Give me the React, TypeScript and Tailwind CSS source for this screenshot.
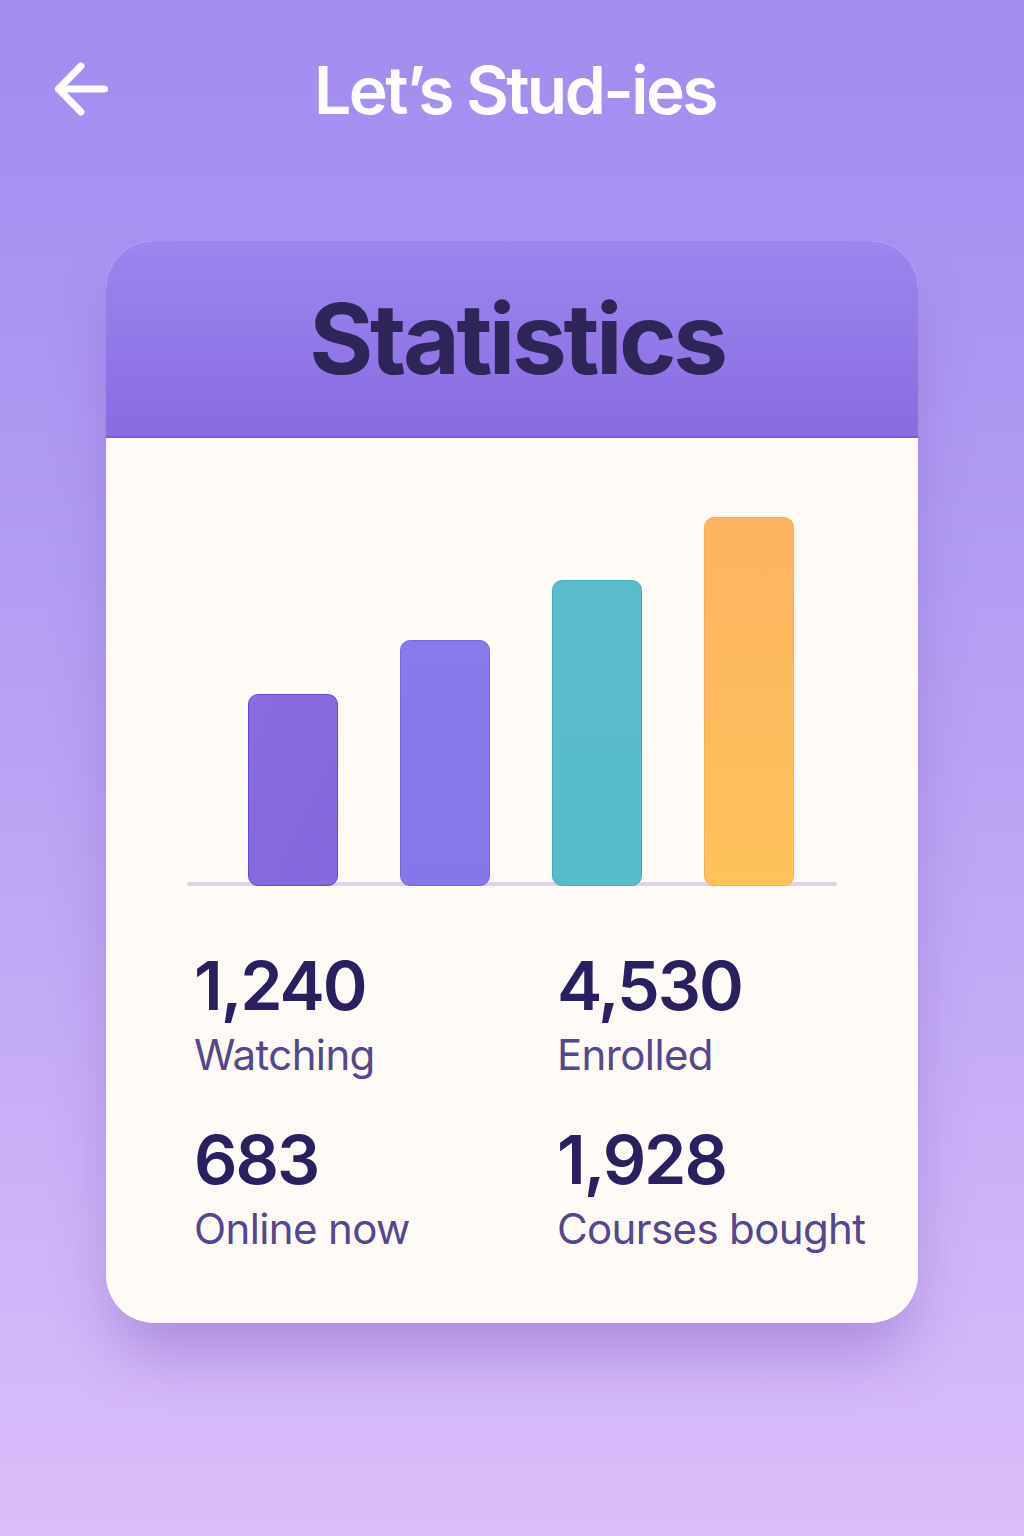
import React from "react";

const bars = [
  { h: 192, cls: "bg-gradient-to-br from-[#8a6ce0] to-[#8467dc] border border-[#6548d2]" },
  { h: 246, cls: "bg-gradient-to-b from-[#877aea] to-[#8677e8] border border-[#7866e3]" },
  { h: 306, cls: "bg-gradient-to-b from-[#59bccb] to-[#57bcca] border border-[#45adbc]" },
  { h: 369, cls: "bg-gradient-to-b from-[#fdb35f] to-[#fec35b] border border-[#f6b04e]" },
];

const stats = [
  { n: "1,240", l: "Watching" },
  { n: "4,530", l: "Enrolled" },
  { n: "683", l: "Online now" },
  { n: "1,928", l: "Courses bought" },
];

export default function App() {
  return (
    <div
      className="min-h-[1536px] w-full bg-gradient-to-b from-[#a18cf0] via-[#b9a3f4] to-[#dbbefa]"
      style={{ fontFamily: "Inter, 'Noto Sans', 'Liberation Sans', sans-serif" }}
    >
      <header className="relative flex h-[180px] items-start justify-center pt-[57px]">
        <button className="absolute left-[48px] top-[56px] flex h-[66px] w-[66px] items-center justify-center text-white">
          <svg width="66" height="66" viewBox="0 0 66 66" fill="none" stroke="currentColor" strokeWidth="7" strokeLinecap="round" strokeLinejoin="round">
            <path d="M33 10 L10.5 33 L33 56" />
            <path d="M10.5 33 H56.5" />
          </svg>
        </button>
        <h1 className="pl-[6px] text-[66px] font-semibold leading-none tracking-[-0.04em] text-white">Let’s Stud-ies</h1>
      </header>

      <div className="mx-auto mt-[61px] w-[812px] overflow-hidden rounded-[48px] bg-[#fefaf5] shadow-[0_40px_60px_-10px_rgba(110,70,180,0.38)]">
        <div className="flex h-[197px] items-center justify-center border-b-2 border-[#7b5ddb] bg-gradient-to-b from-[#9b87ef] to-[#8a6be1]">
          <h2 className="pl-[10px] text-[98px] font-bold leading-none tracking-[-0.035em] text-[#2e2659]">Statistics</h2>
        </div>

        <div className="px-[81px] pt-[79px]">
          <div className="relative h-[369px]">
            <div className="absolute bottom-0 left-0 right-0 h-[4px] rounded-full bg-[#ddd3e8]" />
            <div className="relative flex h-full items-end gap-[62px] pl-[61px]">
              {bars.map((b, i) => (
                <div key={i} className={`w-[90px] rounded-[10px] ${b.cls}`} style={{ height: b.h }} />
              ))}
            </div>
          </div>
        </div>

        <div className="grid grid-cols-[363px_1fr] gap-y-[49px] pb-[73px] pl-[88px] pt-[65px]">
          {stats.map((s) => (
            <div key={s.l} className="flex flex-col gap-[15px]">
              <div className="text-[68px] font-semibold leading-none tracking-[-0.03em] text-[#2b205f]">{s.n}</div>
              <div className="text-[42px] font-normal leading-none tracking-[-0.015em] text-[#54468f]">{s.l}</div>
            </div>
          ))}
        </div>
      </div>
    </div>
  );
}
